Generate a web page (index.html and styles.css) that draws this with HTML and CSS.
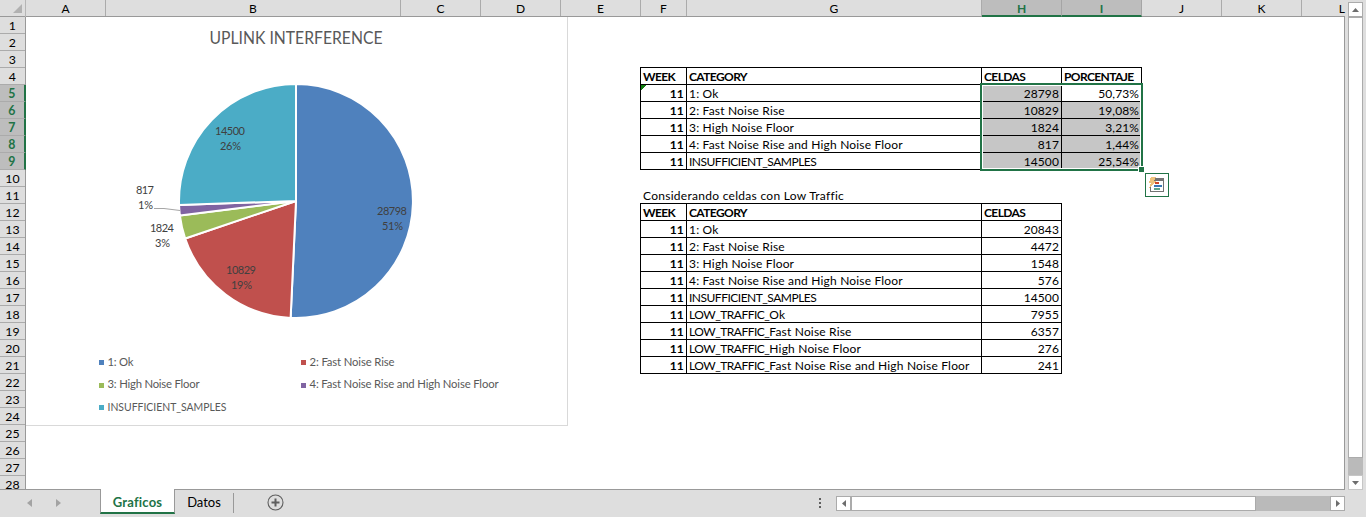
FILE: index.html
```html
<!DOCTYPE html>
<html lang="es">
<head>
<meta charset="utf-8">
<title>Graficos</title>
<link rel="stylesheet" href="styles.css">
</head>
<body>
<div class="app">
  <div class="main">
    <div class="grid">
      <div class="col-heads">
        <div class="corner"><svg width="9" height="9" viewBox="0 0 9 9"><path d="M9 0V9H0Z" fill="#b1b1b1"/></svg></div>
        <div class="ch">A</div><div class="ch">B</div><div class="ch">C</div><div class="ch">D</div><div class="ch">E</div><div class="ch">F</div><div class="ch">G</div><div class="ch sel">H</div><div class="ch sel">I</div><div class="ch">J</div><div class="ch">K</div><div class="ch last">L</div>
      </div>
      <div class="body">
        <div class="row-heads">
          <div>1</div><div>2</div><div>3</div><div>4</div><div class="sel">5</div><div class="sel">6</div><div class="sel">7</div><div class="sel">8</div><div class="sel">9</div><div>10</div><div>11</div><div>12</div><div>13</div><div>14</div><div>15</div><div>16</div><div>17</div><div>18</div><div>19</div><div>20</div><div>21</div><div>22</div><div>23</div><div>24</div><div>25</div><div>26</div><div>27</div><div class="cut">28</div>
        </div>
        <svg class="chart" width="541" height="408" viewBox="26 17 541 408">
          <text class="title" x="209.5" y="44" textLength="173" lengthAdjust="spacingAndGlyphs">UPLINK INTERFERENCE</text>
          <g stroke="#fff" stroke-width="2" stroke-linejoin="round">
            <path fill="#4f81bd" d="M296 201V84A117 117 0 1 1 290.63 317.88Z"/>
            <path fill="#c0504d" d="M296 201L290.63 317.88A117 117 0 0 1 185.17 238.48Z"/>
            <path fill="#9bbb59" d="M296 201L185.17 238.48A117 117 0 0 1 179.9 215.52Z"/>
            <path fill="#8064a2" d="M296 201L179.9 215.52A117 117 0 0 1 179.07 204.98Z"/>
            <path fill="#4bacc6" d="M296 201L179.07 204.98A117 117 0 0 1 296 84Z"/>
          </g>
          <path d="M154 208.5L164 208.5L180 210.5" fill="none" stroke="#a6a6a6"/>
          <g class="lab">
            <text x="215" y="135" textLength="30">14500</text><text x="220" y="150" textLength="21">26%</text>
            <text x="136" y="194" textLength="18">817</text><text x="138" y="209" textLength="15">1%</text>
            <text x="150" y="232" textLength="24">1824</text><text x="155" y="247" textLength="15">3%</text>
            <text x="226" y="274" textLength="30">10829</text><text x="231" y="289" textLength="21">19%</text>
            <text x="377" y="215" textLength="30">28798</text><text x="382" y="230" textLength="21">51%</text>
          </g>
          <g shape-rendering="crispEdges">
            <rect x="99" y="360" width="5" height="5" fill="#4f81bd"/><rect x="301" y="360" width="5" height="5" fill="#c0504d"/>
            <rect x="99" y="383" width="5" height="5" fill="#9bbb59"/><rect x="301" y="383" width="5" height="5" fill="#8064a2"/>
            <rect x="99" y="405" width="5" height="5" fill="#4bacc6"/>
          </g>
          <g class="leg">
            <text x="107.5" y="366" textLength="26">1: Ok</text><text x="309.5" y="366" textLength="85">2: Fast Noise Rise</text>
            <text x="107.5" y="388" textLength="92">3: High Noise Floor</text><text x="309.5" y="388" textLength="189">4: Fast Noise Rise and High Noise Floor</text>
            <text x="107.5" y="411" textLength="119" lengthAdjust="spacingAndGlyphs">INSUFFICIENT_SAMPLES</text>
          </g>
        </svg>
        <div class="tables">
          <div class="table four">
            <div class="h">WEEK</div><div class="h">CATEGORY</div><div class="h">CELDAS</div><div class="h">PORCENTAJE</div>
            <div class="w flag">11</div><div>1: Ok</div><div class="n g">28798</div><div class="n">50,73%</div>
            <div class="w">11</div><div>2: Fast Noise Rise</div><div class="n g">10829</div><div class="n g">19,08%</div>
            <div class="w">11</div><div>3: High Noise Floor</div><div class="n g">1824</div><div class="n g">3,21%</div>
            <div class="w">11</div><div>4: Fast Noise Rise and High Noise Floor</div><div class="n g">817</div><div class="n g">1,44%</div>
            <div class="w">11</div><div><span class="caps">INSUFFICIENT_SAMPLES</span></div><div class="n g">14500</div><div class="n g">25,54%</div>
            <div class="selection"></div><div class="handle"></div>
            <svg class="quick" width="24" height="24" viewBox="0 0 24 24" shape-rendering="crispEdges">
              <path d="M.5.5H23.5V23.5H.5Z" fill="#fff" stroke="#217346"/>
              <path d="M8 5H19V8H8Z" fill="#737373"/><path d="M18.5 7V18.5H5.5V14" fill="none" stroke="#737373"/>
              <path d="M10 9H14V11H10Z" fill="#d24726"/><path d="M9 12H17V14H9Z" fill="#3b78b5"/><path d="M9 15H15V17H9Z" fill="#5fa388"/>
              <path d="M6 4H11L9 8H11L4 15L6 10H4Z" fill="#edc27c"/>
            </svg>
          </div>
          <div class="note">Considerando celdas con Low Traffic</div>
          <div class="table three">
            <div class="h">WEEK</div><div class="h">CATEGORY</div><div class="h">CELDAS</div>
            <div class="w">11</div><div>1: Ok</div><div class="n">20843</div>
            <div class="w">11</div><div>2: Fast Noise Rise</div><div class="n">4472</div>
            <div class="w">11</div><div>3: High Noise Floor</div><div class="n">1548</div>
            <div class="w">11</div><div>4: Fast Noise Rise and High Noise Floor</div><div class="n">576</div>
            <div class="w">11</div><div><span class="caps">INSUFFICIENT_SAMPLES</span></div><div class="n">14500</div>
            <div class="w">11</div><div><span class="caps">LOW_TRAFFIC_</span>Ok</div><div class="n">7955</div>
            <div class="w">11</div><div><span class="caps">LOW_TRAFFIC_</span>Fast Noise Rise</div><div class="n">6357</div>
            <div class="w">11</div><div><span class="caps">LOW_TRAFFIC_</span>High Noise Floor</div><div class="n">276</div>
            <div class="w">11</div><div><span class="caps">LOW_TRAFFIC_</span>Fast Noise Rise and High Noise Floor</div><div class="n">241</div>
          </div>
        </div>
      </div>
    </div>
    <div class="vscroll">
      <div class="btn"><svg width="7" height="4" viewBox="0 0 7 4"><path d="M3.5 0L7 4H0Z" fill="#6d6d6d"/></svg></div>
      <div class="vthumb"></div>
      <div class="vtrack"></div>
      <div class="btn light"><svg width="7" height="4" viewBox="0 0 7 4"><path d="M0 0H7L3.5 4Z" fill="#6d6d6d"/></svg></div>
    </div>
  </div>
  <div class="bottom">
    <div class="nav">
      <svg width="5" height="8" viewBox="0 0 5 8"><path d="M5 0V8L0 4Z" fill="#a3a3a3"/></svg>
      <svg width="5" height="8" viewBox="0 0 5 8"><path d="M0 0V8L5 4Z" fill="#a3a3a3"/></svg>
    </div>
    <div class="tab active">Graficos</div>
    <div class="rest">
      <div class="tab">Datos</div>
      <svg class="plus" width="17" height="17" viewBox="0 0 17 17"><circle cx="8.5" cy="8.5" r="7.5" fill="none" stroke="#5f5f5f" stroke-width="1.1"/><path d="M8.5 4.5V12.5M4.5 8.5H12.5" stroke="#5f5f5f" stroke-width="2"/></svg>
      <div class="dots"><i></i><i></i><i></i></div>
      <div class="hscroll">
        <div class="btn"><svg width="4" height="7" viewBox="0 0 4 7"><path d="M4 0V7L0 3.5Z" fill="#6d6d6d"/></svg></div>
        <div class="hthumb"></div>
        <div class="htrack"></div>
        <div class="btn"><svg width="4" height="7" viewBox="0 0 4 7"><path d="M0 0V7L4 3.5Z" fill="#6d6d6d"/></svg></div>
      </div>
    </div>
  </div>
</div>
</body>
</html>
```

FILE: styles.css
```css
* { box-sizing: border-box; }
body { margin: 0; background: #dedede; font: 12px/17px Lato, "Open Sans", sans-serif; color: #000; overflow: hidden; }
svg { display: block; flex: none; }
.app { width: 1366px; height: 517px; display: flex; flex-direction: column; }
.main { display: flex; height: 489px; }
.grid { width: 1345px; height: 489px; }

.col-heads { display: grid; grid-template-columns: 26px 80px 295px 80px 80px 80px 46px 295px 80px 80px 80px 80px 44px; height: 17px; border-bottom: 1px solid #999; }
.corner { display: flex; justify-content: flex-end; padding: 4px 3px 0 0; border-right: 1px solid #b5b5b5; }
.ch { height: 16px; line-height: 18px; text-align: center; border-right: 1px solid #ababab; }
.ch.last { text-align: right; border-right: 0; padding-right: 1px; }
.ch.sel { height: 17px; background: #bdbdbd; color: #217346; font-weight: bold; border-bottom: 2px solid #217346; border-right-color: #a5a5a5; }
.body { display: flex; height: 472px; background: #fff; }
.row-heads { width: 26px; height: 472px; flex: none; background: #dedede; border-right: 1px solid #999; }
.row-heads div { height: 17px; line-height: 18px; text-align: center; border-bottom: 1px solid #ababab; letter-spacing: .2px; font-size: 12.3px; }
.row-heads .sel { background: #bdbdbd; color: #217346; font-weight: bold; width: 26px; border-right: 2px solid #217346; }
.row-heads .cut { height: 13px; border-bottom: 0; }

.chart { box-sizing: content-box; background: #fff; border-right: 1px solid #d9d9d9; border-bottom: 1px solid #d9d9d9; }
.chart text { font-family: Lato, sans-serif; }
.title { font-size: 17px; fill: #595959; }
.lab { font-size: 11px; fill: #404040; }
.leg { font-size: 11.3px; fill: #595959; }

.tables { width: 777px; padding: 50px 0 0 72px; border-right: 1px solid #999; }
.table { display: grid; grid-auto-rows: 17px; border-left: 1px solid #000; border-top: 1px solid #000; position: relative; }
.four { grid-template-columns: 46px 295px 80px 80px; width: 502px; }
.three { grid-template-columns: 46px 295px 80px; width: 422px; }
.table > div { border-right: 1px solid #000; border-bottom: 1px solid #000; padding: 0 2px; line-height: 18px; white-space: nowrap; letter-spacing: .18px; }
.table > .h { font-weight: bold; letter-spacing: -.6px; }
.table > .w { font-weight: bold; text-align: right; }
.table > .n { text-align: right; letter-spacing: .1px; }
.table > .g { background: #c6c6c6; }
.caps { letter-spacing: -.5px; }
.table > .flag { background: linear-gradient(135deg, #107c10 0 4px, transparent 4px); }
.table > .selection { position: absolute; left: 339px; top: 15px; width: 163px; height: 88px; border: 2px solid #217346; outline: 1px solid #fff; outline-offset: -3px; }
.table > .handle { position: absolute; left: 497px; top: 98px; width: 7px; height: 7px; padding: 0; border: 1px solid #fff; background: #217346; }
.quick { position: absolute; left: 504px; top: 105px; }
.note { height: 33px; padding: 17px 0 0 3px; line-height: 18px; letter-spacing: .28px; }

.vscroll { width: 15px; margin: 2px 0 0 3px; display: flex; flex-direction: column; }
.btn { width: 15px; height: 15px; flex: none; display: flex; align-items: center; justify-content: center; background: #fff; border: 1px solid #ababab; }
.light { border-color: #c6c6c6; margin-bottom: -1px; }
.vthumb { height: 441px; background: #fff; border: 1px solid #ababab; }
.vtrack { flex: 1; background: #bababa; }

.bottom { height: 28px; display: flex; }
.nav { width: 100px; border-top: 1px solid #999; display: flex; gap: 24px; padding: 9px 0 0 27px; }
.tab { font-size: 13px; line-height: 26px; text-align: center; }
.active { width: 75px; height: 25px; background: #fff; color: #217346; font-weight: bold; letter-spacing: .2px; border: solid #999; border-width: 0 1px; border-bottom: 2px solid #217346; }
.rest { width: 1170px; border-top: 1px solid #999; display: flex; }
.rest .tab { width: 59px; height: 20px; margin-top: 3px; line-height: 19px; border-right: 1px solid #999; }
.plus { margin: 4px 0 0 33px; }
.dots { margin: 8px 0 0 535px; width: 2px; display: flex; flex-direction: column; gap: 2px; }
.dots i { width: 2px; height: 2px; background: #5f5f5f; }
.hscroll { display: flex; margin: 6px 0 0 auto; width: 509px; flex: none; height: 15px; }
.hthumb { width: 405px; background: #fff; border: 1px solid #ababab; }
.htrack { flex: 1; background: #bababa; }
```
